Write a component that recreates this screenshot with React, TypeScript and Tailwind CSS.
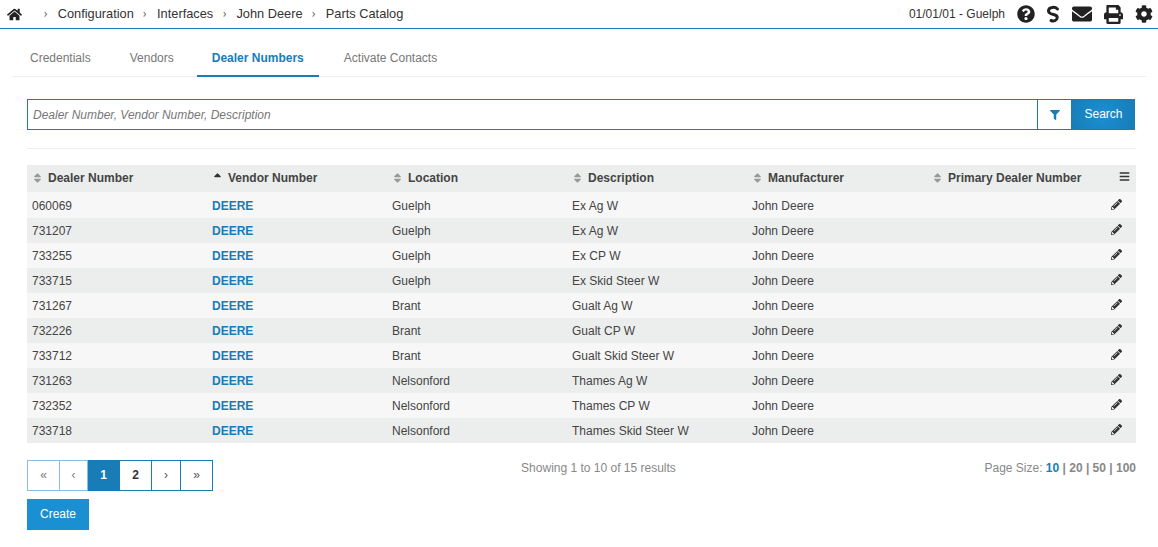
import React from 'react';
import { FaHome, FaQuestionCircle, FaEnvelope, FaPrint, FaCog, FaFilter, FaBars, FaPencilAlt, FaSort, FaSortUp } from 'react-icons/fa';

const crumbs = ['Configuration', 'Interfaces', 'John Deere', 'Parts Catalog'];
const tabs = [
  { label: 'Credentials', cls: 'mr-[8px] pl-[18px] pt-[8px] text-[#777]' },
  { label: 'Vendors', cls: 'mr-[8px] pl-[16px] pt-[8px] text-[#777]' },
  { label: 'Dealer Numbers', cls: 'mr-[10px] pt-[10px] border-b-2 border-[#187cb7] text-[#187cb7] font-bold' },
  { label: 'Activate Contacts', cls: 'mr-[10px] pt-[8px] text-[#777]' },
];
const columns = ['Dealer Number', 'Vendor Number', 'Location', 'Description', 'Manufacturer', 'Primary Dealer Number'];

const rows = [
  ['060069', 'Guelph', 'Ex Ag W'],
  ['731207', 'Guelph', 'Ex Ag W'],
  ['733255', 'Guelph', 'Ex CP W'],
  ['733715', 'Guelph', 'Ex Skid Steer W'],
  ['731267', 'Brant', 'Gualt Ag W'],
  ['732226', 'Brant', 'Gualt CP W'],
  ['733712', 'Brant', 'Gualt Skid Steer W'],
  ['731263', 'Nelsonford', 'Thames Ag W'],
  ['732352', 'Nelsonford', 'Thames CP W'],
  ['733718', 'Nelsonford', 'Thames Skid Steer W'],
];

const pages = [
  { label: '«', w: 'w-[33px]', cls: 'text-[#777] border-[#85c1e3]' },
  { label: '‹', w: 'w-[28px]', cls: 'text-[#777] border-[#85c1e3] border-l-0' },
  { label: '1', w: 'w-[32px]', cls: 'bg-[#187cb7] border-[#187cb7] text-white font-bold border-l-0' },
  { label: '2', w: 'w-[32px]', cls: 'text-[#333] border-[#187cb7] font-bold border-l-0' },
  { label: '›', w: 'w-[29px]', cls: 'text-[#555] border-[#187cb7] border-l-0' },
  { label: '»', w: 'w-[32px]', cls: 'text-[#555] border-[#187cb7] border-l-0' },
];

const App: React.FC = () => {
  return (
    <div className="w-[1158px] h-[547px] overflow-hidden bg-white text-[12px] text-[#333] font-['Liberation_Sans',Arial,sans-serif]">
      {/* Top bar */}
      <div className="h-[29px] border-b border-[#187cb7] flex items-center justify-between pl-[7px] pr-[5px]">
        <div className="flex items-center">
          <FaHome className="w-[15px] h-[15px] text-[#222] mr-[21px]" />
          {crumbs.map((c) => (
            <React.Fragment key={c}>
              <span className="text-[#555] text-[13px] mr-[9.5px] font-['DejaVu_Sans',sans-serif] scale-x-75">›</span>
              <span className="text-[12.8px] text-[#333] mr-[8.5px]">{c}</span>
            </React.Fragment>
          ))}
        </div>
        <div className="flex items-center">
          <span className="text-[12px] text-[#333] mr-[12px]">01/01/01 - Guelph</span>
          <FaQuestionCircle className="w-[18px] h-[18px] text-[#222] mr-[11px]" />
          <svg viewBox="0 0 14 18" className="w-[14px] h-[18px] mr-[12px] -mt-[1px]" fill="none" stroke="#222" strokeWidth="3" strokeLinecap="round">
            <path d="M11.5 4 C9 1.5 3 1.8 2.5 5.5 C2.2 8 5 9 7.5 9.5 C10 10 11.5 11 11.2 13 C11 15.5 7.5 16.5 5 15.5" />
          </svg>
          <FaEnvelope className="w-[20px] h-[20px] text-[#222] mr-[12px]" />
          <FaPrint className="w-[19px] h-[19px] text-[#222] mr-[12px]" />
          <FaCog className="w-[18px] h-[18px] text-[#222]" />
        </div>
      </div>

      {/* Tabs */}
      <div className="mx-[12px] h-[48px] border-b border-[#eeeeee] flex items-end">
        {tabs.map((t) => (
          <div key={t.label} className={`h-[47px] mb-[-1px] pl-[15px] pr-[15px] flex items-center ${t.cls}`}>
            {t.label}
          </div>
        ))}
      </div>

      <div className="px-[27px] pr-[22px]">
        {/* Search */}
        <div className="mt-[22px] h-[31px] w-[1108px] flex border border-[#187cb7]">
          <div className="flex-1 flex items-center pl-[5px] italic text-[#777]">Dealer Number, Vendor Number, Description</div>
          <div className="w-[34px] border-l border-[#187cb7] flex items-center justify-center">
            <FaFilter className="w-[10px] h-[10px] text-[#187cb7]" />
          </div>
          <div className="w-[63px] pl-[2px] pb-[2px] bg-[#187cb7] bg-[radial-gradient(circle,#1b8fd2_0%,#187cb7_100%)] flex items-center justify-center text-white">Search</div>
        </div>

        <div className="mt-[18px] h-px w-[1109px] bg-[#eeeeee]" />

        {/* Table */}
        <div className="mt-[16px] w-[1109px]">
          <div className="h-[28px] pb-[2px] bg-[#eceeee] grid grid-cols-[180px_180px_180px_180px_180px_1fr] items-center border-b border-[#f8f8f8]">
            {columns.map((c, i) => (
              <div key={c} className="flex items-center font-bold text-[#444]">
                {i === 1 ? (
                  <FaSortUp className="w-[11px] h-[12px] text-[#333] ml-[5px] mr-[5px]" />
                ) : (
                  <FaSort className="w-[11px] h-[12px] text-[#999] ml-[5px] mr-[5px]" />
                )}
                {c}
                {i === 5 && <FaBars className="w-[11px] h-[11px] text-[#333] ml-auto mr-[6px] -mt-[3px]" />}
              </div>
            ))}
          </div>
          {rows.map((r, i) => (
            <div
              key={r[0]}
              className={`h-[25px] grid grid-cols-[180px_180px_180px_180px_180px_1fr] items-center text-[#444] ${i % 2 === 0 ? 'bg-[#f7f7f7]' : 'bg-[#eceeee]'}`}
            >
              <div className="pl-[5px]">{r[0]}</div>
              <div className="pl-[5px] font-bold text-[#187cb7]">DEERE</div>
              <div className="pl-[5px]">{r[1]}</div>
              <div className="pl-[5px]">{r[2]}</div>
              <div className="pl-[5px]">John Deere</div>
              <div className="flex justify-end pr-[14px]">
                <FaPencilAlt className="w-[11px] h-[11px] text-[#333] -mt-[3px]" />
              </div>
            </div>
          ))}
        </div>

        {/* Footer */}
        <div className="mt-[17px] w-[1109px] grid grid-cols-[387px_369px_1fr]">
          <div className="flex h-[31px]">
            {pages.map((p) => (
              <div key={p.label} className={`${p.w} pb-[1px] border flex items-center justify-center ${p.cls}`}>{p.label}</div>
            ))}
          </div>
          <div className="text-center text-[#888] leading-[15px] pt-[1px]">Showing 1 to 10 of 15 results</div>
          <div className="text-right text-[#888] leading-[15px] pt-[1px]">
            Page Size: <span className="font-bold text-[#187cb7]">10</span>
            <span className="font-bold"> | 20 | 50 | 100</span>
          </div>
        </div>

        <div className="mt-[8px] w-[62px] h-[31px] pb-[2px] bg-[#1a8fd2] text-white flex items-center justify-center">Create</div>
      </div>
    </div>
  );
};

export default App;
